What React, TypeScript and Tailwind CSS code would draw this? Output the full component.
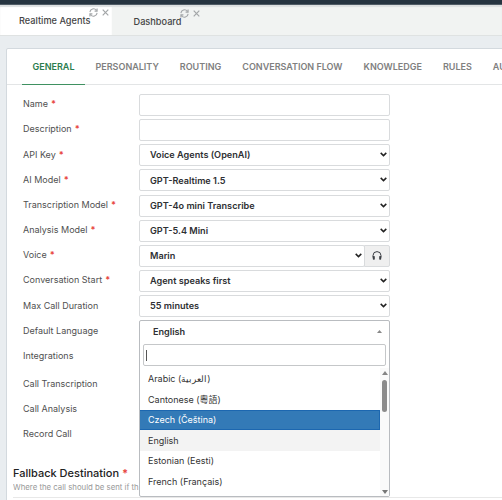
import React, { useState } from "react";

type Field = {
  label: string;
  required?: boolean;
  value?: string;
  kind: "text" | "select" | "voice" | "language";
};

const FIELDS: Field[] = [
  { label: "Name", required: true, kind: "text" },
  { label: "Description", required: true, kind: "text" },
  { label: "API Key", required: true, value: "Voice Agents (OpenAI)", kind: "select" },
  { label: "AI Model", required: true, value: "GPT-Realtime 1.5", kind: "select" },
  { label: "Transcription Model", required: true, value: "GPT-4o mini Transcribe", kind: "select" },
  { label: "Analysis Model", required: true, value: "GPT-5.4 Mini", kind: "select" },
  { label: "Voice", required: true, value: "Marin", kind: "voice" },
  { label: "Conversation Start", required: true, value: "Agent speaks first", kind: "select" },
  { label: "Max Call Duration", value: "55 minutes", kind: "select" },
  { label: "Default Language", value: "English", kind: "language" },
];

const TABS = ["GENERAL", "PERSONALITY", "ROUTING", "CONVERSATION FLOW", "KNOWLEDGE", "RULES", "AUDIO"];

const LANGUAGES = [
  "Arabic (العربية)",
  "Cantonese (粵語)",
  "Czech (Čeština)",
  "English",
  "Estonian (Eesti)",
  "French (Français)",
];

const Star = () => <span className="ml-[3px] font-bold text-[#e8473f]">*</span>;

const Chevron = () => (
  <svg width="7" height="5" viewBox="0 0 7 5" fill="none" stroke="#222" strokeWidth="1.5">
    <path d="M0.7 0.9 3.5 3.6 6.3 0.9" />
  </svg>
);

const TabTools = () => (
  <span className="flex items-center gap-[4px] text-[#a3a6a8]">
    <svg width="9" height="9" viewBox="0 0 9 9" fill="none" stroke="currentColor" strokeWidth="1.1">
      <path d="M0.9 4.1A3.6 3.6 0 0 1 7.4 2.3M8.1 0.6V3.1H5.6M8.1 4.9A3.6 3.6 0 0 1 1.6 6.7M0.9 8.4V5.9H3.4" />
    </svg>
    <svg width="7" height="7" viewBox="0 0 7 7" fill="none" stroke="currentColor" strokeWidth="1.2">
      <path d="M0.7 0.7 6.3 6.3M6.3 0.7 0.7 6.3" />
    </svg>
  </span>
);

const Headphones = () => (
  <svg width="10" height="9" viewBox="0 0 10 9" fill="none">
    <path d="M1 6.5V4.6a4 4 0 0 1 8 0v1.9" stroke="#3c3f45" strokeWidth="1" />
    <rect x="0.8" y="5" width="2" height="3.7" rx="0.7" fill="#3c3f45" />
    <rect x="7.2" y="5" width="2" height="3.7" rx="0.7" fill="#3c3f45" />
  </svg>
);

const SelectBox = ({ value }: { value?: string }) => (
  <div className="flex h-[22px] min-w-0 flex-1 items-center justify-between rounded-[2px] border border-[#d9dbdd] bg-white pb-px pl-[10px] pr-[2px]">
    <span className="pt-px text-[9.15px] font-semibold text-[#2e3033]">{value}</span>
    <Chevron />
  </div>
);

const LanguageSelect = () => {
  const [selected] = useState("English");
  const [active, setActive] = useState("Czech (Čeština)");

  return (
    <div className="relative h-[22px] w-[251px]">
      <div className="absolute left-0 top-0 z-10 flex h-[177px] w-[251px] flex-col rounded-[2px] border border-[#b9bcc0] bg-white">
        <div className="flex h-[22px] shrink-0 items-center justify-between pb-[2px] pl-[13px] pr-[7px]">
          <span className="text-[9.15px] font-semibold text-[#2e3033]">{selected}</span>
          <svg width="5" height="3" viewBox="0 0 5 3" fill="#888">
            <path d="M0 3 2.5 0 5 3Z" />
          </svg>
        </div>
        <div className="mx-[3px] mt-px flex h-[22px] shrink-0 items-center rounded-[2px] border border-[#c5c7c9] pl-[2px]">
          <span className="h-[11px] w-px bg-[#555]" />
        </div>
        <div className="mt-[2px] flex min-h-0 flex-1">
          <div className="flex-1">
            {LANGUAGES.map((name) => (
              <div
                key={name}
                onMouseEnter={() => setActive(name)}
                className={`flex h-[20.6px] items-center whitespace-nowrap text-[9px] ${
                  name === active
                    ? "border-y border-r border-[#1c67b0] bg-[#337ab7] pl-[8px] text-white"
                    : name === selected
                      ? "bg-[#f3f3f3] pl-[8px] text-[#333]"
                      : "pl-[8px] text-[#333]"
                }`}
              >
                {name}
              </div>
            ))}
          </div>
          <div className="flex w-[9px] flex-col items-center bg-[#fafafa] pb-[2px] pt-[3px]">
            <svg width="6" height="4" viewBox="0 0 6 4" fill="#858585">
              <path d="M0 4 3 0 6 4Z" />
            </svg>
            <div className="mt-[5px] h-[32px] w-[5px] rounded-full bg-[#8b8b8b]" />
            <svg className="mt-auto" width="6" height="4" viewBox="0 0 6 4" fill="#777">
              <path d="M0 0 3 4 6 0Z" />
            </svg>
          </div>
        </div>
      </div>
    </div>
  );
};

const Control = ({ field }: { field: Field }) => {
  if (field.kind === "language") return <LanguageSelect />;
  if (field.kind === "text") {
    return <div className="h-[22px] w-[251px] rounded-[2px] border border-[#d9dbdd] bg-white" />;
  }
  return (
    <div className="flex w-[251px]">
      <SelectBox value={field.value} />
      {field.kind === "voice" && (
        <div className="-ml-px flex h-[22px] w-[26px] items-center justify-center rounded-r-[2px] border border-[#d9dbdd] bg-[#efefef]">
          <Headphones />
        </div>
      )}
    </div>
  );
};

const App: React.FC = () => {
  return (
    <div className="h-[500px] w-[502px] overflow-hidden bg-[#e9edf0] font-['Inter','Noto_Sans_CJK_TC',sans-serif] text-[#505050]">
      <div className="h-[5px] border-b border-[#4f5b65] bg-[#263440]" />
      <div className="flex h-[31px] border-b border-[#dfe2e2] bg-[#f1f3f2] text-[9.2px] font-medium text-[#444] shadow-[inset_0_2px_1px_#dcdfe0]">
        <div className="flex w-[112px] bg-white pl-[19px] shadow-[inset_0_2px_1px_#dcdfe0]">
          <span className="mt-[9px] whitespace-nowrap">Realtime Agents</span>
          <span className="-ml-px mt-[3px]">
            <TabTools />
          </span>
        </div>
        <div className="flex pl-[21.5px]">
          <span className="mt-[9.5px]">Dashboard</span>
          <span className="-ml-px mt-[4px]">
            <TabTools />
          </span>
        </div>
      </div>

      <div className="ml-[6px] mt-[12px] h-[460px] w-[560px] rounded-tl-[2px] border border-[#d3d9de] bg-white">
        <div className="flex h-[36px] border-b border-[#e3e5e6] pl-[15px] text-[9px] font-semibold text-[#808080]">
          {TABS.map((tab) => (
            <div
              key={tab}
              className={`flex h-[36px] items-center whitespace-nowrap px-[10.5px] ${
                tab === "GENERAL" ? "border-b border-[#3f9161] text-[#2b7d4e]" : ""
              }`}
            >
              {tab}
            </div>
          ))}
        </div>

        <div className="pl-[16px] pt-[9px] text-[9px]">
          {FIELDS.map((field) => (
            <div key={field.label} className="flex h-[25.17px] items-start">
              <div className="flex h-[20px] w-[116px] shrink-0 items-center whitespace-nowrap">
                {field.label}
                {field.required && <Star />}
              </div>
              <Control field={field} />
            </div>
          ))}
          <div className="flex h-[28px] items-start pt-[4px] leading-[12px]">Integrations</div>
          <div className="flex h-[25px] items-start pt-[4px] leading-[12px]">Call Transcription</div>
          <div className="flex h-[25px] items-start pt-[4px] leading-[12px]">Call Analysis</div>
          <div className="flex h-[25px] items-start pt-[4px] leading-[12px]">Record Call</div>
        </div>

        <div className="mx-[6px] mt-[17px] h-[32px] border-b border-[#e8e8e8]">
          <div className="text-[11px] font-medium leading-[15px] text-[#222]">
            Fallback Destination
            <Star />
          </div>
          <div className="w-[126px] overflow-hidden whitespace-nowrap text-[7.8px] leading-[12px] text-[#999]">
            Where the call should be sent if th
          </div>
        </div>
      </div>
    </div>
  );
};

export default App;
